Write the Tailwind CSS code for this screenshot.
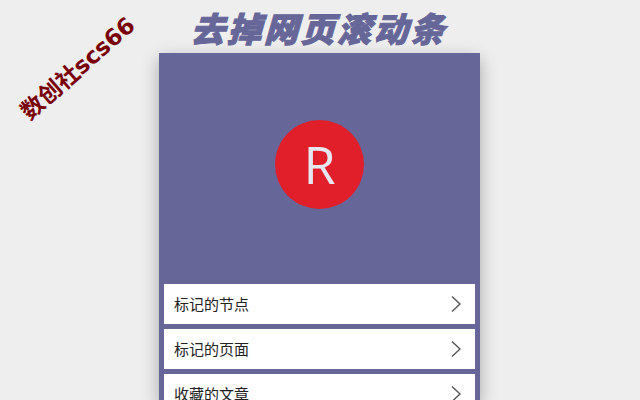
<!DOCTYPE html>
<html lang="zh-CN">
<head>
  <meta charset="UTF-8">
  <title>去掉网页滚动条</title>
  <script src="https://cdn.jsdelivr.net/npm/@tailwindcss/browser@4"></script>
</head>
<body class="relative h-screen overflow-hidden bg-[#eeeeee] font-['Noto_Sans_CJK_SC','Noto_Sans',sans-serif]">
  <!-- watermark -->
  <div class="absolute left-[7px] top-[56px] w-[140px] -rotate-[41deg] whitespace-nowrap text-center font-['DejaVu_Sans','Noto_Sans_CJK_SC',sans-serif] text-[23px] leading-[26px] font-bold text-[#7a0008]">数创社scs66</div>

  <h1 class="flex h-[53px] items-start justify-center pt-[8px] pl-[6px] text-[34px] leading-[40px] font-black tracking-[2.6px] text-[#666699] -skew-x-[16deg] [-webkit-text-stroke:1px_#666699]">去掉网页滚动条</h1>

  <main class="ml-[159px] h-[347px] w-[321px] overflow-hidden bg-[#666699] shadow-[0_6px_16px_rgba(0,0,0,0.3)]">
    <div class="flex h-[231px] items-center justify-center">
      <div class="mt-[-9px] flex size-[89px] items-center justify-center rounded-full bg-[#e11f2b] font-['Open_Sans',sans-serif] text-[52px] text-[#e6e6f0]">R</div>
    </div>
    <ul class="flex flex-col gap-[5px] px-[5px] text-[15px] text-[#222222]">
      <li class="flex h-[40px] items-center justify-between bg-white pr-[14px] pl-[10px]">
        <span>标记的节点</span>
        <svg class="h-[16px] w-[10px]" viewBox="0 0 10 16" fill="none" stroke="#555555" stroke-width="1.4"><path d="M1 .5L9 8l-8 7.5"/></svg>
      </li>
      <li class="flex h-[40px] items-center justify-between bg-white pr-[14px] pl-[10px]">
        <span>标记的页面</span>
        <svg class="h-[16px] w-[10px]" viewBox="0 0 10 16" fill="none" stroke="#555555" stroke-width="1.4"><path d="M1 .5L9 8l-8 7.5"/></svg>
      </li>
      <li class="flex h-[40px] items-center justify-between bg-white pr-[14px] pl-[10px]">
        <span>收藏的文章</span>
        <svg class="h-[16px] w-[10px]" viewBox="0 0 10 16" fill="none" stroke="#555555" stroke-width="1.4"><path d="M1 .5L9 8l-8 7.5"/></svg>
      </li>
    </ul>
  </main>
</body>
</html>
